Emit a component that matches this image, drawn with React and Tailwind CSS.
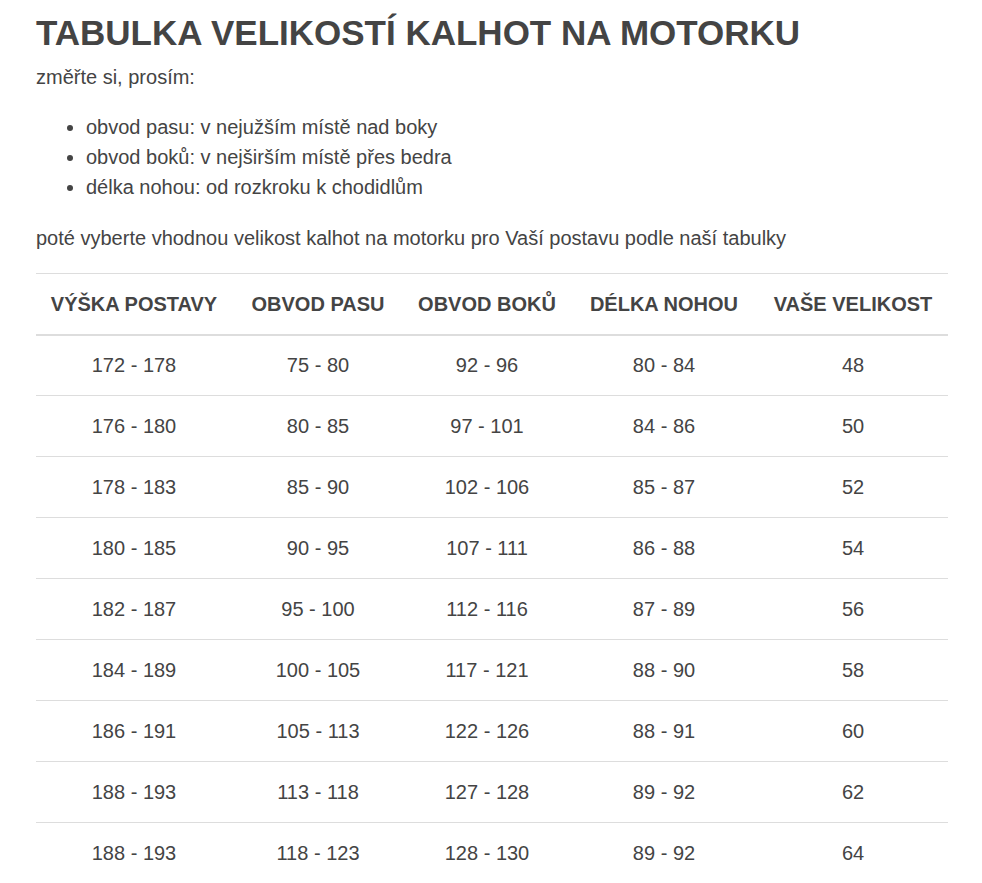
import React from "react";

const rows = [
  ["172 - 178", "75 - 80", "92 - 96", "80 - 84", "48"],
  ["176 - 180", "80 - 85", "97 - 101", "84 - 86", "50"],
  ["178 - 183", "85 - 90", "102 - 106", "85 - 87", "52"],
  ["180 - 185", "90 - 95", "107 - 111", "86 - 88", "54"],
  ["182 - 187", "95 - 100", "112 - 116", "87 - 89", "56"],
  ["184 - 189", "100 - 105", "117 - 121", "88 - 90", "58"],
  ["186 - 191", "105 - 113", "122 - 126", "88 - 91", "60"],
  ["188 - 193", "113 - 118", "127 - 128", "89 - 92", "62"],
  ["188 - 193", "118 - 123", "128 - 130", "89 - 92", "64"],
];

const headers = ["Výška postavy", "Obvod pasu", "Obvod boků", "Délka nohou", "Vaše velikost"];
const widths = ["w-[196px]", "w-[172px]", "w-[166px]", "w-[188px]", "w-[190px]"];

export default function App() {
  return (
    <div className="min-h-screen bg-white text-[#444] font-['Liberation_Sans',Arial,sans-serif] px-9 pt-[13px]">
      {/* Nadpis */}
      <h1 className="text-[35px] leading-[40px] font-bold uppercase">Tabulka velikostí kalhot na motorku</h1>
      <p className="mt-[9px] text-[20px] leading-[30px]">změřte si, prosím:</p>

      <ul className="mt-5 pl-[50px] list-disc text-[20px] leading-[30px]">
        <li>obvod pasu: v nejužším místě nad boky</li>
        <li>obvod boků: v nejširším místě přes bedra</li>
        <li>délka nohou: od rozkroku k chodidlům</li>
      </ul>

      <p className="mt-[21px] text-[20px] leading-[30px]">
        poté vyberte vhodnou velikost kalhot na motorku pro Vaší postavu podle naší tabulky
      </p>

      {/* Tabulka */}
      <table className="mt-5 w-[912px] border-collapse table-fixed text-[20px]">
        <thead>
          <tr className="border-t border-[#ddd] border-b-2">
            {headers.map((h, i) => (
              <th key={h} className={`${widths[i]} h-[61px] text-center font-bold uppercase`}>
                {h}
              </th>
            ))}
          </tr>
        </thead>
        <tbody>
          {rows.map((r, i) => (
            <tr key={i} className="border-b border-[#ddd]">
              {r.map((c, j) => (
                <td key={j} className="h-[61px] text-center">
                  {c}
                </td>
              ))}
            </tr>
          ))}
        </tbody>
      </table>
    </div>
  );
}
